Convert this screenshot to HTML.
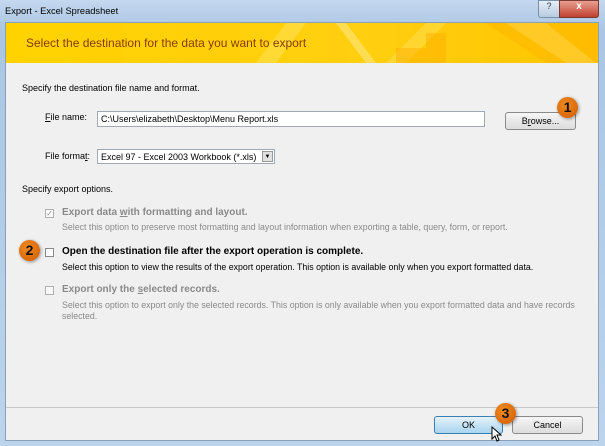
<!DOCTYPE html>
<html><head><style>
body{margin:0;width:605px;height:446px;overflow:hidden;background:#bcd3ea;font-family:"Liberation Sans",sans-serif;font-size:9px;color:#000;position:relative}
.a{position:absolute}
.frame{left:0;top:0;width:605px;height:446px;background:linear-gradient(#c4d8ee,#aac6e4 30px,#bcd4ec);}
.content{left:5px;top:22px;width:594px;height:419px;background:#f0f0f0;border:1px solid #8aa0b8;box-sizing:border-box}
.banner{left:6px;top:23px;width:592px;height:40px;background:linear-gradient(90deg,#ffd200,#ffcf10 60%,#ffc400);overflow:hidden}
.t{white-space:nowrap}
.box{background:#fff;border:1px solid #a0a8b4;box-sizing:border-box}
.btn{border:1px solid #8a8a8a;border-radius:3px;background:linear-gradient(#f6f6f6,#dcdcdc);box-sizing:border-box;text-align:center;line-height:16px}
.badge{width:21px;height:21px;border-radius:50%;background:radial-gradient(circle at 40% 35%,#f08a20,#d05a00);color:#111;font-weight:bold;font-size:14px;text-align:center;line-height:21px;box-shadow:1px 1px 3px rgba(0,0,0,.4)}
.cb{width:9px;height:9px;border:1px solid #b0b0b0;background:#f8f8f8;box-sizing:border-box}
.g{color:#8a8a8a}
.h{font-weight:bold;font-size:10px}
.s{font-size:8.8px}
</style></head><body>
<div class="a frame"></div>
<div class="a t" style="left:5px;top:6px;font-size:9.3px">Export - Excel Spreadsheet</div>
<div class="a" style="left:538px;top:0;width:20px;height:16px;border:1px solid #7890a8;border-radius:0 0 0 3px;background:linear-gradient(#e4eef8,#b8cce0);text-align:center;font-size:9px;color:#334">?</div>
<div class="a" style="left:559px;top:0;width:38px;height:16px;border:1px solid #7a3a30;border-radius:0 0 3px 0;background:linear-gradient(#e8a090,#c04030);text-align:center;color:#fff;font-weight:bold;font-size:10px">x</div>
<div class="a content"></div>
<div class="a banner">
<svg width="592" height="40" style="position:absolute;left:0;top:0">
<polygon points="250,40 280,0 300,0 270,40" fill="#ffe050" opacity=".6"/>
<polygon points="330,0 360,40 370,40 340,0" fill="#ffe680" opacity=".6"/>
<polygon points="380,40 420,0 440,0 400,40" fill="#ffd840" opacity=".7"/>
<polygon points="390,25 420,25 420,10 440,10 440,40 390,40" fill="#ffb000" opacity=".5"/>
<polygon points="480,0 540,40 592,40 592,0" fill="#ffb800" opacity=".6"/>
<polygon points="500,0 540,0 590,40 560,40" fill="#ffd040" opacity=".6"/>
</svg>
<div class="a t" style="left:20px;top:13px;font-size:12px;color:#8a3a00">Select the destination for the data you want to export</div>
</div>
<div class="a t" style="left:22px;top:83px">Specify the destination file name and format.</div>
<div class="a t" style="left:45px;top:112px"><u>F</u>ile name:</div>
<div class="a box t" style="left:97px;top:111px;width:388px;height:16px;padding:2px 3px">C:\Users\elizabeth\Desktop\Menu Report.xls</div>
<div class="a btn" style="left:505px;top:112px;width:71px;height:18px">B<u>r</u>owse...</div>
<div class="a badge" style="left:557px;top:97px">1</div>
<div class="a t" style="left:45px;top:151px">File forma<u>t</u>:</div>
<div class="a box t" style="left:97px;top:149px;width:178px;height:15px;padding:2px 3px">Excel 97 - Excel 2003 Workbook (*.xls)</div>
<div class="a" style="left:262px;top:151px;width:11px;height:11px;background:#e0e0e0;border:1px solid #999;box-sizing:border-box;font-size:6px;text-align:center;line-height:10px">▼</div>
<div class="a t" style="left:22px;top:184px">Specify export options.</div>
<div class="a cb" style="left:45px;top:209px;font-size:8px;line-height:7px;color:#999;text-align:center">✓</div>
<div class="a t g h" style="left:62px;top:207px">Export data <u>w</u>ith formatting and layout.</div>
<div class="a t g s" style="left:62px;top:222px">Select this option to preserve most formatting and layout information when exporting a table, query, form, or report.</div>
<div class="a badge" style="left:19px;top:240px">2</div>
<div class="a cb" style="left:45px;top:248px;border-color:#8a8a8a;background:#fff"></div>
<div class="a t h" style="left:62px;top:246px">Open the destination file after the export operation is complete.</div>
<div class="a t s" style="left:62px;top:262px">Select this option to view the results of the export operation. This option is available only when you export formatted data.</div>
<div class="a cb" style="left:45px;top:286px"></div>
<div class="a t g h" style="left:62px;top:284px">Export only the <u>s</u>elected records.</div>
<div class="a t g s" style="left:62px;top:300px">Select this option to export only the selected records. This option is only available when you export formatted data and have records</div>
<div class="a t g s" style="left:62px;top:311px">selected.</div>
<div class="a" style="left:6px;top:407px;width:592px;height:1px;background:#c8c8c8"></div>
<div class="a btn" style="left:434px;top:416px;width:69px;height:18px;background:linear-gradient(#e6f2fa,#a8d4f0);border-color:#3c7fb1">OK</div>
<div class="a btn" style="left:512px;top:416px;width:71px;height:18px">Cancel</div>
<div class="a badge" style="left:495px;top:403px">3</div>
<svg class="a" style="left:491px;top:426px" width="12" height="16"><path d="M1,1 L1,13 L4,10 L6,15 L8,14 L6,9 L10,9 Z" fill="#fff" stroke="#000" stroke-width="1"/></svg>
</body></html>
